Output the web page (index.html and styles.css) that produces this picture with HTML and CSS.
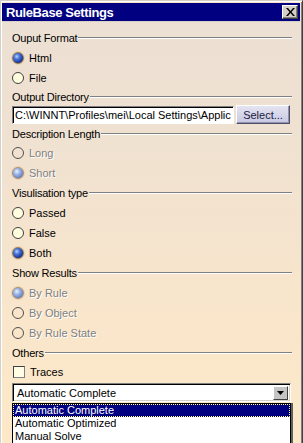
FILE: index.html
```html
<!DOCTYPE html>
<html>
<head>
<meta charset="utf-8">
<link rel="stylesheet" href="styles.css">
</head>
<body>
<div class="window">
  <div class="titlebar">
    <span class="title">RuleBase Settings</span>
    <span class="close"><svg width="9" height="8" viewBox="0 0 9 8"><path d="M0 0h2l2.5 3 2.5-3h2L5.5 4 9 8H7L4.5 5 2 8H0l3.5-4z" fill="#000"/></svg></span>
  </div>
  <div class="body">
    <div class="head h20"><span>Ouput Format</span><i class="groove"></i></div>
    <div class="opt"><span class="radio on"></span><span>Html</span></div>
    <div class="opt"><span class="radio"></span><span>File</span></div>
    <div class="head h18"><span>Output Directory</span><i class="groove"></i></div>
    <div class="field">
      <div class="input">C:\WINNT\Profiles\mei\Local Settings\Applic</div>
      <div class="btn">Select...</div>
    </div>
    <div class="head h19"><span>Description Length</span><i class="groove"></i></div>
    <div class="opt dis"><span class="radio"></span><span>Long</span></div>
    <div class="opt dis"><span class="radio on"></span><span>Short</span></div>
    <div class="head h20"><span>Visulisation type</span><i class="groove"></i></div>
    <div class="opt"><span class="radio"></span><span>Passed</span></div>
    <div class="opt"><span class="radio"></span><span>False</span></div>
    <div class="opt"><span class="radio on"></span><span>Both</span></div>
    <div class="head h20"><span>Show Results</span><i class="groove"></i></div>
    <div class="opt dis"><span class="radio on"></span><span>By Rule</span></div>
    <div class="opt dis"><span class="radio"></span><span>By Object</span></div>
    <div class="opt dis"><span class="radio"></span><span>By Rule State</span></div>
    <div class="head h20"><span>Others</span><i class="groove"></i></div>
    <div class="chk"><span class="box"></span><span>Traces</span></div>
    <div class="combo-wrap">
      <div class="combo">
        <span class="combo-text">Automatic Complete</span>
        <span class="drop"><svg width="7" height="4" viewBox="0 0 7 4"><path d="M0 0h7L3.5 4z" fill="#000"/></svg></span>
      </div>
      <div class="list">
        <div class="item sel">Automatic Complete</div>
        <div class="item">Automatic Optimized</div>
        <div class="item">Manual Solve</div>
      </div>
    </div>
  </div>
</div>
</body>
</html>
```
FILE: styles.css
```css
html, body {
  margin: 0;
  padding: 0;
  background: #f5e5cf;
}
.window {
  width: 303px;
  height: 443px;
  box-sizing: border-box;
  border-top: 1px solid #d4d0c8;
  border-left: 1px solid #d4d0c8;
  border-right: 1px solid #404040;
  box-shadow: inset 1px 1px 0 #fff, inset -1px 0 0 #808080;
  padding: 1px 2px 0 1px;
  display: flex;
  flex-direction: column;
  overflow: hidden;
  font-family: "Liberation Sans", Arial, sans-serif;
  font-size: 11px;
  color: #000;
}
.titlebar {
  height: 18px;
  margin-top: 1px;
  background: #000080;
  display: flex;
  align-items: center;
  justify-content: space-between;
  padding: 0 2px 0 4px;
  flex: none;
}
.title {
  color: #fff;
  font-weight: bold;
  font-size: 13px;
  letter-spacing: -0.4px;
}
.close {
  width: 14px;
  height: 12px;
  background: #d4d0c8;
  border-top: 1px solid #fff;
  border-left: 1px solid #fff;
  border-right: 1px solid #404040;
  border-bottom: 1px solid #404040;
  box-shadow: inset -1px -1px 0 #808080;
  display: flex;
  align-items: center;
  justify-content: center;
}
.body {
  flex: 1;
  background: linear-gradient(180deg, #ece0d4 0%, #f1e2d0 35%, #f9e6cb 70%, #fde9c9 100%);
  padding: 6px 8px 0 10px;
  display: flex;
  flex-direction: column;
  border-top: 1px solid #d8cfc6;
}
.head {
  display: flex;
  align-items: center;
  letter-spacing: -0.2px;
}
.h20 { height: 20px; }
.h18 { height: 18px; }
.h19 { height: 19px; }
.groove {
  flex: 1;
  height: 0;
  border-top: 1px solid #808080;
  border-bottom: 1px solid #fff;
  margin-left: 1px;
}
.opt {
  height: 20px;
  display: flex;
  align-items: center;
}
.radio {
  width: 10px;
  height: 10px;
  border-radius: 50%;
  border: 1px solid #404040;
  background: #ffffe0;
  margin-right: 5px;
  flex: none;
}
.radio.on {
  border-color: #9c7a50;
  background: radial-gradient(circle at 38% 35%, #b8d0ff 0%, #4a78d8 30%, #1a3ca0 65%, #0a1a60 100%);
  box-shadow: 0 0 0 1px #e8d2b0;
}
.dis {
  color: #808080;
  text-shadow: 1px 1px 0 #fff;
}
.dis .radio {
  background: transparent;
  border-color: #505050;
}
.dis .radio.on {
  border-color: #a89070;
  background: radial-gradient(circle at 38% 35%, #e8f0ff 0%, #9ab4e8 35%, #6a88c8 70%, #4a68a8 100%);
}
.field {
  height: 18px;
  display: flex;
  align-items: center;
  gap: 2px;
  padding-right: 2px;
}
.input {
  flex: 1;
  height: 18px;
  box-sizing: border-box;
  background: #fff;
  border-top: 1px solid #808080;
  border-left: 1px solid #808080;
  border-right: 1px solid #fff;
  border-bottom: 1px solid #fff;
  box-shadow: inset 1px 1px 0 #000;
  padding: 2px 0 0 2px;
  white-space: nowrap;
  overflow: hidden;
  line-height: 13px;
}
.btn {
  width: 54px;
  height: 19px;
  box-sizing: border-box;
  margin-top: -1px;
  background: linear-gradient(180deg, #e4e4f2 0%, #c8c8e2 100%);
  border-top: 1px solid #fff;
  border-left: 1px solid #fff;
  border-right: 1px solid #50506a;
  border-bottom: 1px solid #50506a;
  box-shadow: inset -1px -1px 0 #9090b0;
  display: flex;
  align-items: center;
  justify-content: center;
  color: #202040;
}
.chk {
  height: 18px;
  display: flex;
  align-items: center;
}
.box {
  width: 10px;
  height: 10px;
  margin-left: 1px;
  margin-right: 5px;
  background: #fffde6;
  border-top: 1px solid #404040;
  border-left: 1px solid #404040;
  border-right: 1px solid #808080;
  border-bottom: 1px solid #808080;
}
.combo-wrap {
  position: relative;
  margin-top: 2px;
  padding-right: 1px;
}
.combo {
  height: 19px;
  box-sizing: border-box;
  background: #fff;
  border-top: 1px solid #808080;
  border-left: 1px solid #808080;
  border-right: 1px solid #fff;
  border-bottom: 1px solid #fff;
  box-shadow: inset 1px 1px 0 #000, inset -1px -1px 0 #d4d0c8;
  display: flex;
  align-items: center;
  justify-content: space-between;
  padding: 0 2px 0 4px;
}
.drop {
  width: 13px;
  height: 12px;
  background: #c4c4c4;
  border-top: 1px solid #fff;
  border-left: 1px solid #fff;
  border-right: 1px solid #404040;
  border-bottom: 1px solid #404040;
  display: flex;
  align-items: center;
  justify-content: center;
}
.list {
  position: absolute;
  left: 0;
  right: 1px;
  top: 20px;
  height: 60px;
  background: #fff;
  border: 1px solid #000;
  box-shadow: 2px 0 0 #606060;
}
.item {
  height: 13px;
  line-height: 13px;
  padding-left: 2px;
  white-space: nowrap;
}
.item.sel {
  background: #000080;
  color: #fff;
  outline: 1px dotted #ffff80;
  outline-offset: -1px;
}
```
